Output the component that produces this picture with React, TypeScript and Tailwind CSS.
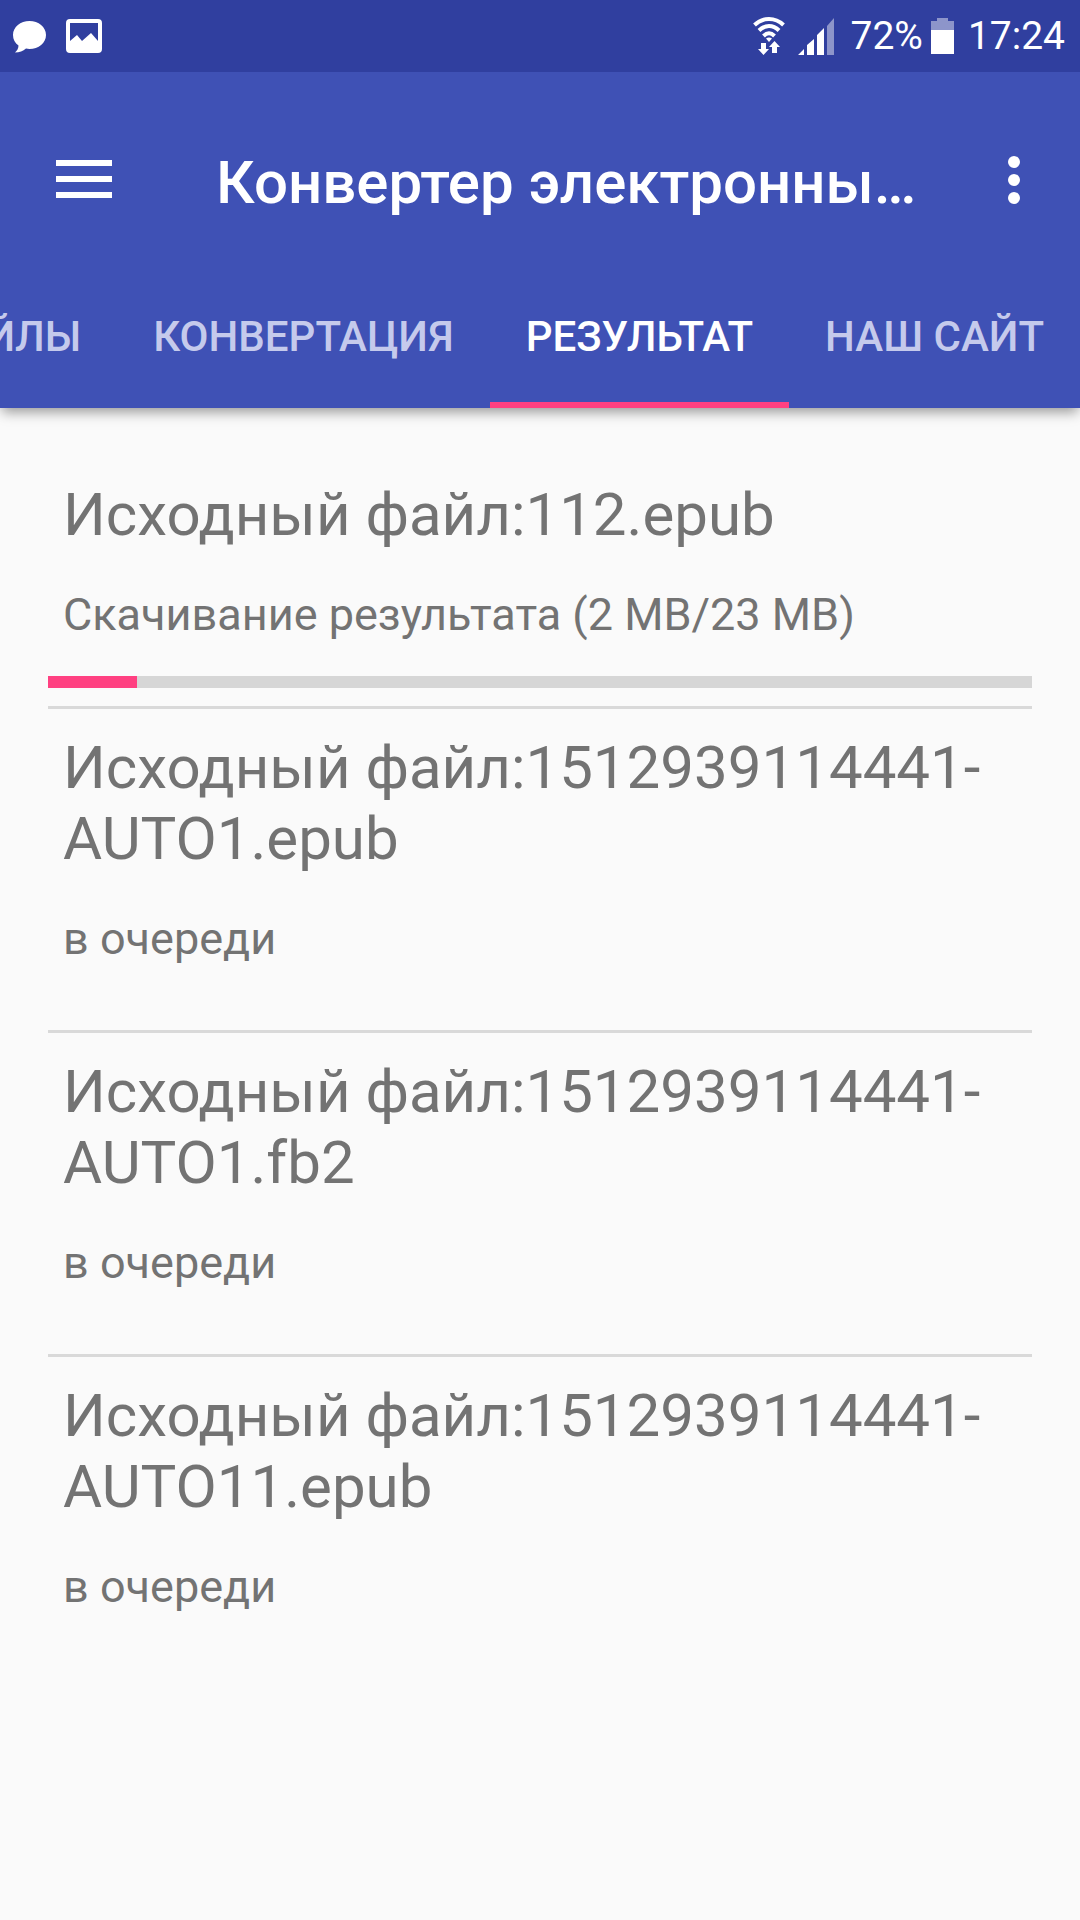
import { useState } from "react";

type Job = {
  file: string;
  status: string;
  progress?: number;
};

const JOBS: Job[] = [
  { file: "112.epub", status: "Скачивание результата (2 MB/23 MB)", progress: 9 },
  { file: "1512939114441-AUTO1.epub", status: "в очереди" },
  { file: "1512939114441-AUTO1.fb2", status: "в очереди" },
  { file: "1512939114441-AUTO11.epub", status: "в очереди" },
];

const TABS = ["ФАЙЛЫ", "КОНВЕРТАЦИЯ", "РЕЗУЛЬТАТ", "НАШ САЙТ"];

function StatusBar() {
  return (
    <div className="relative flex h-[72px] items-center justify-between bg-[#303f9f] pr-[15px] pl-3 text-white">
      <div className="flex items-center gap-5">
        <svg className="h-9 w-[34px]" viewBox="0 0 34 36" fill="currentColor">
          <path d="M17.5 3C8.5 3 1 9 1 17c0 4.500 2 8 5.500 10.500C6.500 30.500 5 32.500 3 34.500c4.500 0 8-1.500 11-4 1 .3 2.300.5 3.500.5 9 0 16.500-6 16.500-14S26.500 3 17.500 3z" />
        </svg>
        <svg className="h-9 w-9" viewBox="0 0 36 36" fill="currentColor">
          <path
            fillRule="evenodd"
            d="M4 1h28a4 4 0 0 1 4 4v26a4 4 0 0 1-4 4H4a4 4 0 0 1-4-4V5a4 4 0 0 1 4-4zm0 4v18l7-6 5 6 9-8 7 8V5z"
          />
        </svg>
      </div>
      <div className="flex items-center text-[39px]">
        <svg className="mr-3 h-[38px] w-8" viewBox="0 0 32 38" fill="none" stroke="currentColor" strokeWidth="4">
          <path d="M1.500 8C10 0 22 0 30.500 8M6 13.500C12 7.500 20 7.500 26 13.500M10.500 19C14 15.500 18 15.500 21.500 19" />
          <path d="M16 25l-3-3.500c2-1.500 4-1.500 6 0z" fill="currentColor" stroke="none" />
          <path
            d="M8 26h5v6h3l-5.500 6L5 32h3zM19 36h5v-6h3l-5.500-6L16 30h3z"
            fill="currentColor"
            stroke="none"
          />
        </svg>
        <svg className="mr-[15px] h-[38px] w-[38px]" viewBox="0 0 38 38" fill="currentColor">
          <path d="M1 38l6-6v6zM10 28l7-6v16H10zM20 18l7-7v27h-7z" />
          <path d="M30 9l7-8v37h-7z" opacity=".45" />
        </svg>
        <span>72%</span>
        <svg className="mr-[14px] ml-2 h-9 w-[23px]" viewBox="0 0 23 36" fill="currentColor">
          <path d="M0 3h6V0h11v3h6v9H0z" opacity=".45" />
          <path d="M0 12h23v24H0z" />
        </svg>
        <span>17:24</span>
      </div>
    </div>
  );
}

function JobItem({ job }: { job: Job }) {
  return (
    <li className="border-b-[3px] border-[#d9d9d9] pt-[7px] last:border-b-0">
      <h2 className="px-[15px] py-4 text-[60px] leading-[71px]">Исходный файл:{job.file}</h2>
      <p className="px-[15px] py-4 text-[45px] leading-[66px]">{job.status}</p>
      <div className="h-[42px] pt-3">
        {job.progress !== undefined && (
          <div
            role="progressbar"
            aria-label={job.file}
            aria-valuenow={job.progress}
            className="h-3 bg-[#d6d6d6]"
          >
            <div className="h-full bg-[#ff4081]" style={{ width: `${job.progress}%` }} />
          </div>
        )}
      </div>
    </li>
  );
}

function App() {
  const [activeTab, setActiveTab] = useState("РЕЗУЛЬТАТ");

  const tabClass = (tab: string) =>
    `shrink-0 border-b-[6px] px-9 pb-[17px] text-[42px] font-medium ${
      activeTab === tab ? "border-[#ff4081] text-white" : "border-transparent text-[#c5caec]"
    }`;

  return (
    <div className="min-h-screen overflow-x-hidden bg-[#fafafa] font-[Roboto,sans-serif]">
      <StatusBar />

      <header className="bg-[#3f51b5] text-white shadow-[0_6px_12px_-2px_rgba(0,0,0,0.4)]">
        <div className="flex h-[216px] items-center pr-[54px] pl-14">
          <button aria-label="Меню" className="shrink-0 pb-0.5">
            <svg className="h-[38px] w-14" viewBox="0 0 56 38" fill="currentColor">
              <path d="M0 0h56v6H0zM0 16h56v6H0zM0 32h56v6H0z" />
            </svg>
          </button>
          <h1 className="ml-[104px] min-w-0 flex-1 truncate pt-[5px] text-[60px] font-medium">
            Конвертер электронных книг
          </h1>
          <button aria-label="Ещё" className="ml-[72px] shrink-0">
            <svg className="h-12 w-6" viewBox="0 0 24 48" fill="currentColor">
              <circle cx="12" cy="6" r="6" />
              <circle cx="12" cy="24" r="6" />
              <circle cx="12" cy="42" r="6" />
            </svg>
          </button>
        </div>

        <nav className="flex h-[120px] justify-end">
          {TABS.map((tab) => (
            <button key={tab} className={tabClass(tab)} onClick={() => setActiveTab(tab)}>
              {tab}
            </button>
          ))}
        </nav>
      </header>

      <main className="px-12 pt-12 text-[#737373]">
        <ul>
          {JOBS.map((job) => (
            <JobItem key={job.file} job={job} />
          ))}
        </ul>
      </main>
    </div>
  );
}

export default App;
